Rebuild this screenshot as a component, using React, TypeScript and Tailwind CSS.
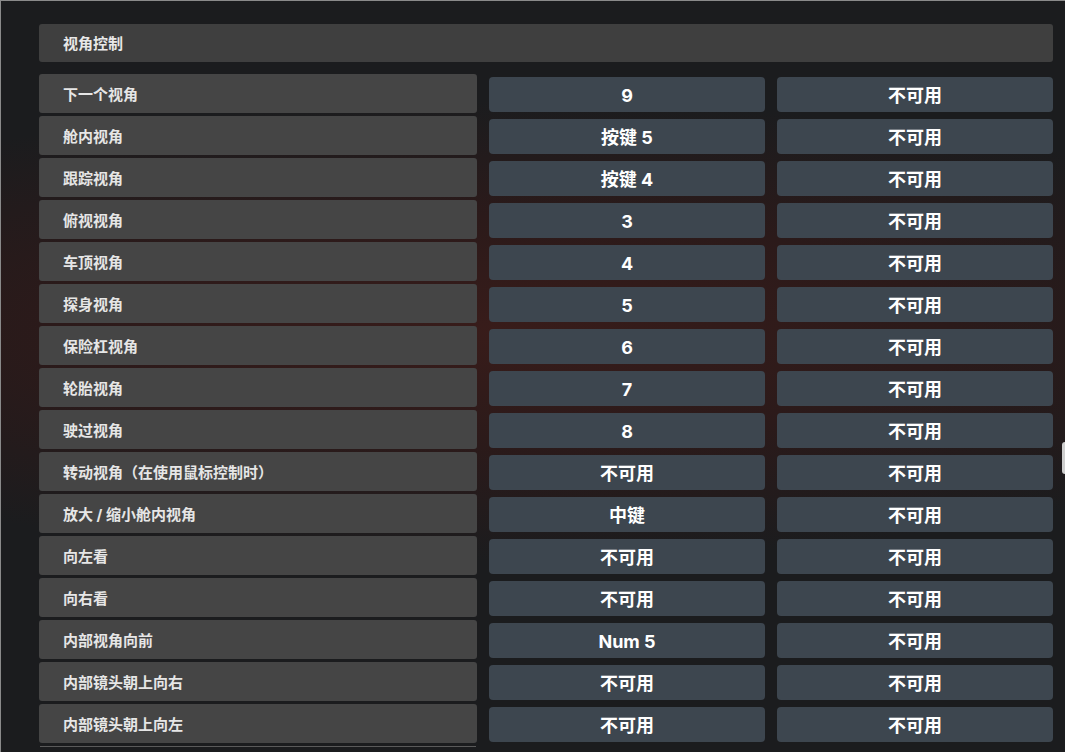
import React from "react";

const rows: [string, string, string][] = [
  ["下一个视角", "9", "不可用"],
  ["舱内视角", "按键 5", "不可用"],
  ["跟踪视角", "按键 4", "不可用"],
  ["俯视视角", "3", "不可用"],
  ["车顶视角", "4", "不可用"],
  ["探身视角", "5", "不可用"],
  ["保险杠视角", "6", "不可用"],
  ["轮胎视角", "7", "不可用"],
  ["驶过视角", "8", "不可用"],
  ["转动视角（在使用鼠标控制时）", "不可用", "不可用"],
  ["放大 / 缩小舱内视角", "中键", "不可用"],
  ["向左看", "不可用", "不可用"],
  ["向右看", "不可用", "不可用"],
  ["内部视角向前", "Num 5", "不可用"],
  ["内部镜头朝上向右", "不可用", "不可用"],
  ["内部镜头朝上向左", "不可用", "不可用"],
];

const font = {
  fontFamily: '"Inter", "Noto Sans CJK SC", "Noto Sans", sans-serif',
};

export default function App() {
  return (
    <div
      className="relative h-[752px] w-[1065px] overflow-hidden border-l border-t border-[#8a8a8a] bg-[#1b1c1e]"
      style={font}
    >
      <div className="pointer-events-none absolute inset-0 bg-[radial-gradient(ellipse_900px_230px_at_500px_330px,#381c1a_0%,#2b1a1a_50%,rgba(27,28,30,0)_100%)]" />
      <div className="absolute right-0 top-[441px] h-[32px] w-[3px] rounded-l-sm bg-[#cfcfcf]" />
      <div className="relative flex flex-col pl-[38px] pr-[12px] pt-[23px]">
        <div className="flex h-[38px] items-center rounded-[3px] bg-[#3f3f3f] pl-[24px] pt-[2px] text-[15px] font-bold text-[#e8e8e8]">
          视角控制
        </div>
        <div className="mt-[12px] flex flex-col gap-[3px]">
          {rows.map(([label, k1, k2]) => (
            <div
              key={label}
              className="grid h-[39px] grid-cols-[438px_276px_276px] gap-x-[12px]"
            >
              <div className="flex h-[39px] items-center rounded-[3px] bg-[#454545] pl-[24px] pt-[3px] text-[15px] font-bold text-[#e6e6e6]">
                {label}
              </div>
              <div className="mt-[3px] flex h-[35px] items-center justify-center rounded-[4px] bg-[#3d464f] pt-[2px] text-[18px] font-bold text-white">
                {k1}
              </div>
              <div className="mt-[3px] flex h-[35px] items-center justify-center rounded-[4px] bg-[#3d464f] pt-[2px] text-[18px] font-bold text-white">
                {k2}
              </div>
            </div>
          ))}
          <div className="grid grid-cols-[438px_276px_276px] gap-x-[12px]">
            <div className="mx-px h-px bg-[#5a5a5a]" />
          </div>
        </div>
      </div>
    </div>
  );
}
